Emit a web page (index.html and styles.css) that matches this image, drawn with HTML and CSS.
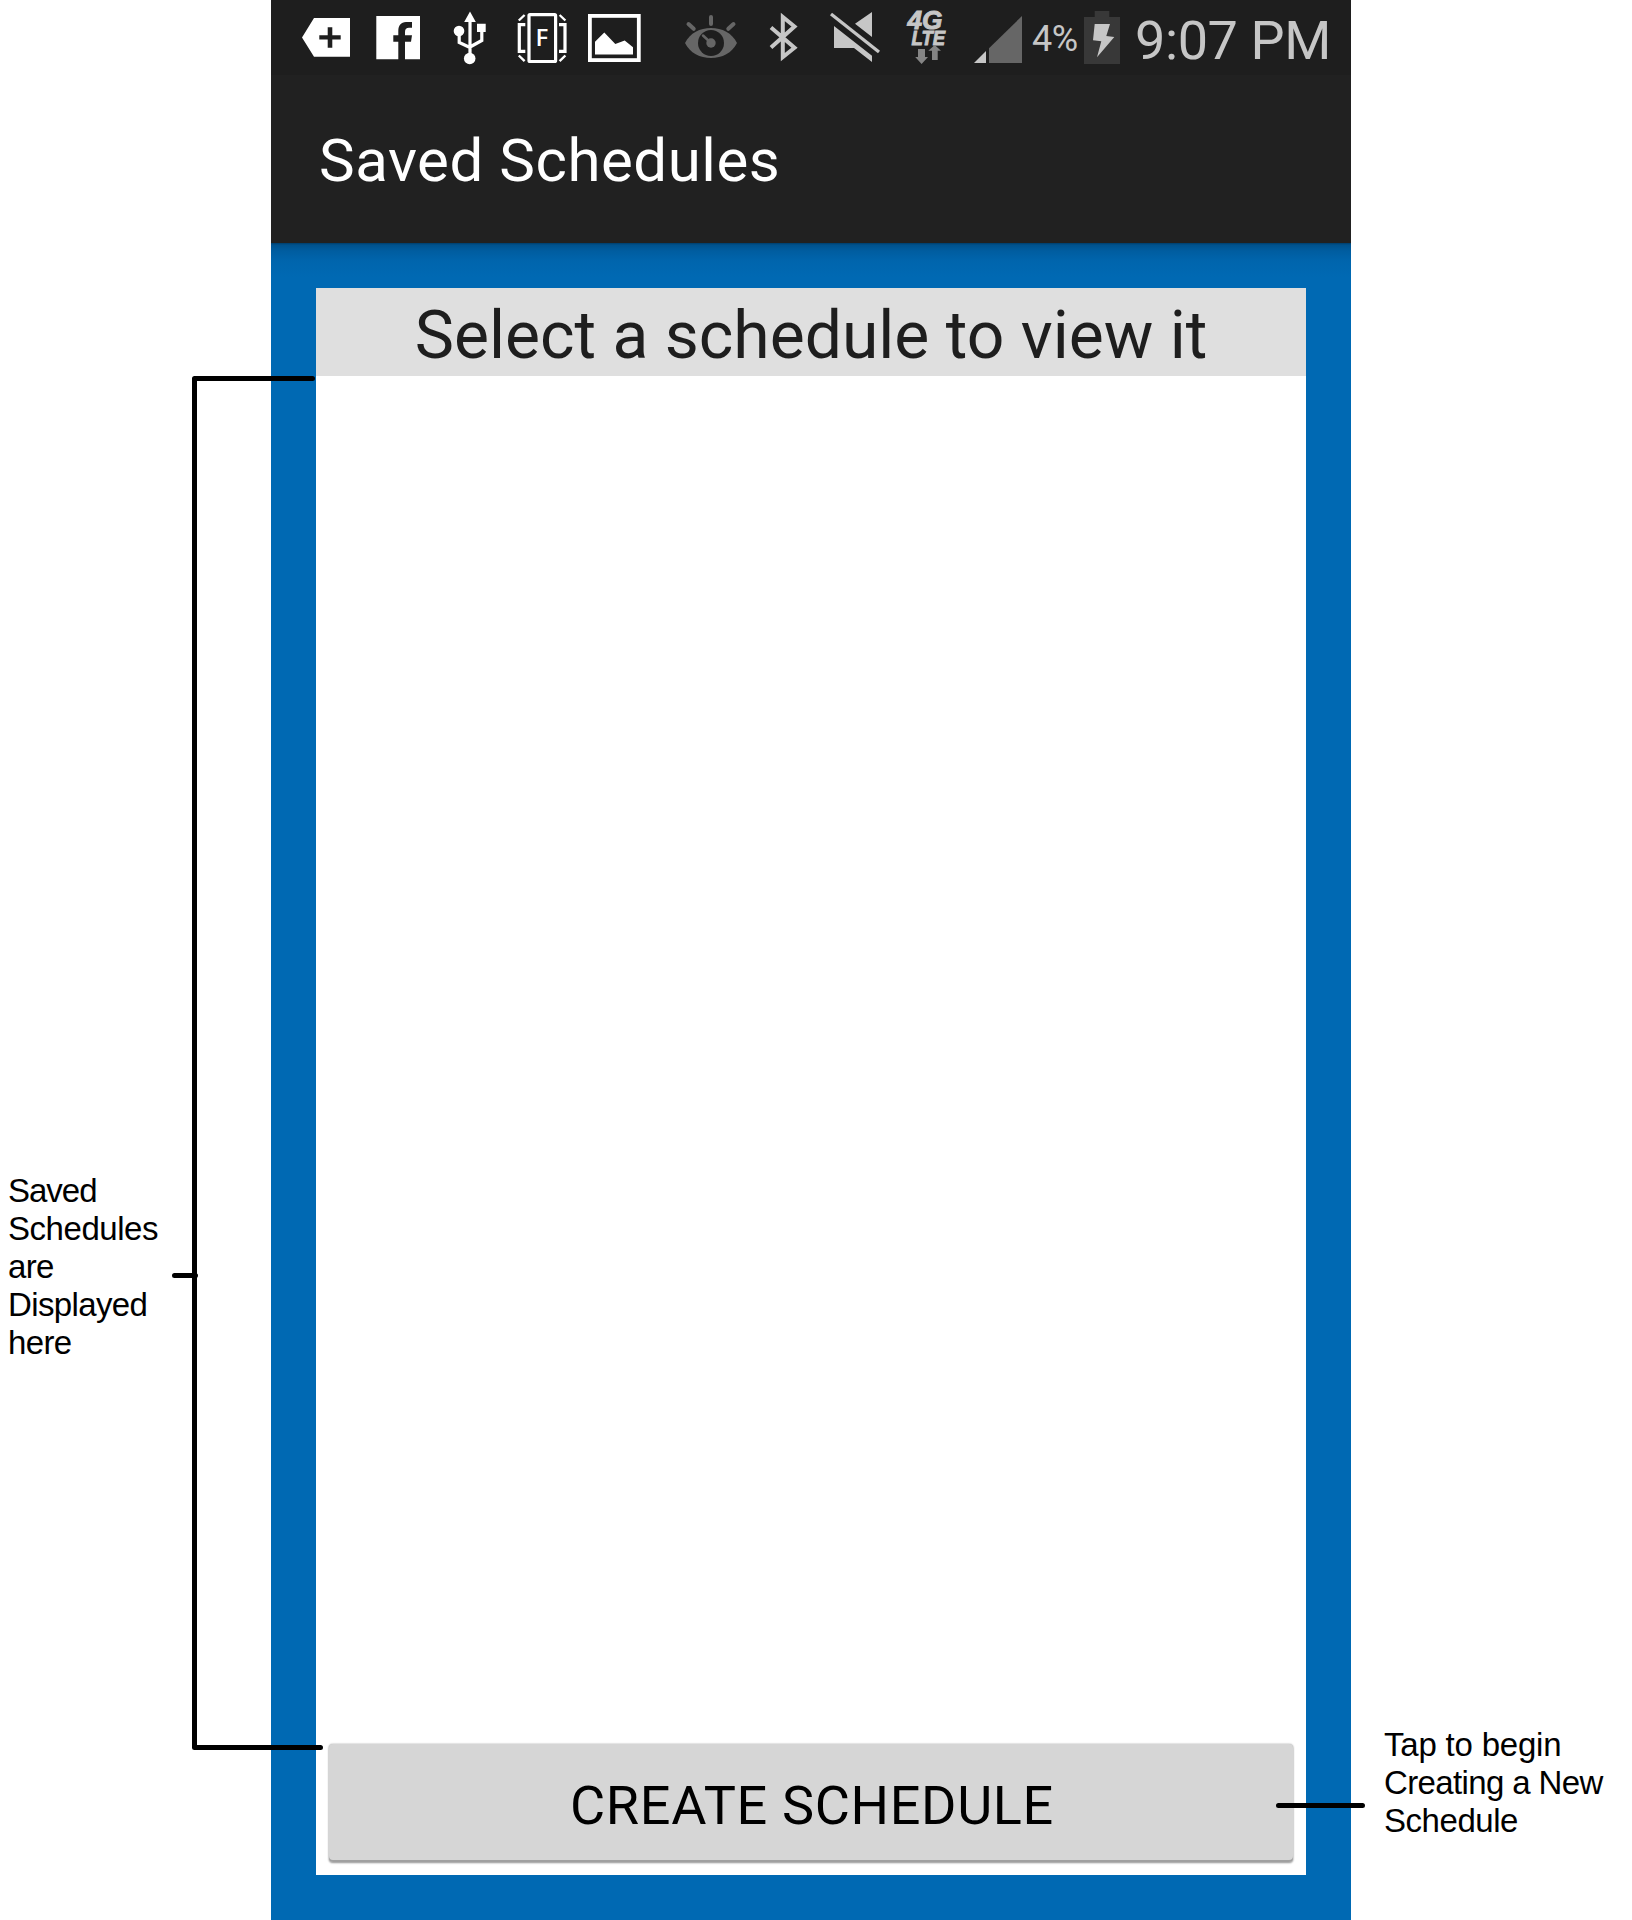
FILE: index.html
```html
<!DOCTYPE html>
<html lang="en">
<head>
<meta charset="utf-8">
<title>Saved Schedules</title>
<link rel="stylesheet" href="styles.css">
</head>
<body>
<div class="sheet">
  <aside class="note note-left"><span class="tightest">Saved</span><br><span class="snug">Schedules</span><br><span class="tight">are</span><br><span class="tight">Displayed</span><br><span class="tight">here</span></aside>
  <main class="phone">
    <div class="status">
      <div class="icons">
        <svg width="70" height="75" viewBox="293 0 70 75"><path class="w" fill-rule="evenodd" d="M302 37.6 314 18H350V56.8H314ZM327.7 27.3V35.2H319.3V39.6H327.7V47.7H332.3V39.6H340.7V35.2H332.3V27.3Z"/></svg>
        <svg width="73" height="75" viewBox="363 0 73 75"><path class="w" d="M376.3 16H420V59.3H405V41.8H411L412 35.2H405V32C405 29 406.5 27.7 409 27.7H412V22H406C401 22 398.3 25.5 398.3 31V35.2H393.3V41.8H398.3V59.3H376.3Z"/></svg>
        <svg width="67" height="75" viewBox="436 0 67 75"><path class="w" d="M470 11.5 475.8 22H464.2ZM477 23.7H485.7V32H477Z"/><circle class="w" cx="459" cy="31" r="5.3"/><circle class="w" cx="469.7" cy="58.5" r="5.8"/><path class="ws" d="M470 20V56M459.2 33V42.5L470 47.5M481.8 30V40.5L470 47"/></svg>
        <svg width="74" height="75" viewBox="503 0 74 75"><rect class="ws" x="529" y="14.7" width="26.6" height="46.8" rx="1"/><path class="ws" d="M525.3 24.7H519.3V51.3H525.3M559 24.7H565V51.3H559"/><path class="ws thin" d="M518.8 20.5 524.6 15M559.6 15 565.4 20.5M518.8 55.5 524.6 61.2M565.4 55.5 559.6 61.2"/><text class="f" x="535.5" y="46">F</text></svg>
        <svg width="73" height="75" viewBox="577 0 73 75"><rect class="ws thick" x="589.9" y="15.9" width="48.9" height="44.2"/><path class="w" d="M595 54.5V41.7L604.3 32.5 615.3 44 624.7 40.5 633 47.3V54.5Z"/></svg>
      </div>
      <div class="icons system">
        <svg width="72" height="75" viewBox="675 0 72 75"><path class="d" d="M685 43C690 33 700 28 711 28S732 33 737 43C732 53 722 58 711 58S690 53 685 43Z"/><circle class="bg" cx="711" cy="43" r="13"/><circle class="d" cx="711" cy="43" r="4.7"/><path class="ds" d="M711 17V24M688.5 24 693.7 28.8M733.5 24 728.3 28.8"/><path class="ds fine" d="M703 35.5 711 43"/></svg>
        <svg width="70" height="75" viewBox="747 0 70 75"><path class="gs" d="M771 27.5 794.5 47.7 782.8 57V17L794.5 26.5 771 47.5"/></svg>
        <svg width="76" height="75" viewBox="817 0 76 75"><path class="g" d="M872 12V37L855 23.7ZM834 26 872 55.7V62L854 48H834Z"/><path class="gs slash" d="M831 14 879 52"/></svg>
        <svg width="66" height="75" viewBox="893 0 66 75"><text class="net" x="907.5" y="29.3" font-size="25.5" textLength="35" lengthAdjust="spacingAndGlyphs">4G</text><text class="net" x="911.5" y="45.4" font-size="20" textLength="33.5" lengthAdjust="spacingAndGlyphs">LTE</text><path class="a" d="M918 49H925V57H928L921.6 64 915.2 57H918ZM932 60V50.7H928.3L934.7 45 941 50.7H937.7V60Z"/></svg>
        <svg width="70" height="75" viewBox="959 0 70 75"><path class="g" d="M974 63H986V51Z"/><path class="d" d="M989 63V48.3L1022 16V63Z"/></svg>
      </div>
      <span class="percent">4%</span>
      <svg width="40" height="75" viewBox="1082 0 40 75"><path class="b" d="M1084 17H1094.7V11H1109.3V17H1120V64H1084Z"/><path class="g" d="M1094.7 24H1110L1106.3 36 1114.3 37 1097 57.3 1101.3 41.2 1093 40.3Z"/></svg>
      <span class="time">9:07 PM</span>
    </div>
    <header class="appbar"><h1>Saved Schedules</h1></header>
    <section class="content">
      <div class="panel">
        <h2>Select a schedule to view it</h2>
        <div class="list"></div>
        <button class="create">CREATE SCHEDULE</button>
      </div>
    </section>
  </main>
  <aside class="note note-right"><span class="loose">Tap to begin</span><br><span class="tight">Creating a New</span><br><span class="snug">Schedule</span></aside>
  <svg class="lines" width="1632" height="1920" viewBox="0 0 1632 1920"><path d="M312.5 378.5H194.5V1747.5H320.5M174.5 1275.5H195.5M1278.5 1805.5H1362.5"/></svg>
</div>
</body>
</html>
```
FILE: styles.css
```css
* { box-sizing: border-box; }
body { margin: 0; background: #fff; }
.sheet {
  position: relative;
  display: grid;
  grid-template-columns: 271px 1080px 281px;
  width: 1632px;
  height: 1920px;
  overflow: hidden;
}
.phone {
  display: flex;
  flex-direction: column;
  font-family: Roboto, sans-serif;
  background: #0069b3;
}
.status {
  display: flex;
  height: 75px;
  padding-left: 22px;
  background: #1e1e1e;
  color: #c6c6c6;
  white-space: nowrap;
}
.icons { display: flex; }
.icons.system { margin-left: 25px; }
.status svg { display: block; flex: none; }
.w { fill: #fff; }
.g { fill: #c6c6c6; }
.d { fill: #666; }
.a { fill: #858585; }
.b { fill: #383838; }
.bg { fill: #1e1e1e; }
.ws { fill: none; stroke: #fff; stroke-width: 3.2; }
.ws.thin { stroke-width: 2.4; }
.ws.thick { stroke-width: 3.8; }
.ds { fill: none; stroke: #666; stroke-width: 4; stroke-linecap: round; }
.ds.fine { stroke-width: 2.5; }
.gs { fill: none; stroke: #c6c6c6; stroke-width: 4; }
.gs.slash { stroke-width: 3.3; }
.f { fill: #fff; font: 600 24px "Open Sans", sans-serif; }
.net {
  fill: #c6c6c6;
  stroke: #c6c6c6;
  stroke-width: .9;
  font-family: "Liberation Sans", sans-serif;
  font-weight: bold;
  font-style: italic;
}
.percent {
  width: 53px;
  padding: 18px 0 0 3px;
  font-size: 36px;
  line-height: 42px;
  letter-spacing: -.6px;
}
.time {
  padding: 9px 0 0 13px;
  font-size: 54px;
  line-height: 64px;
  letter-spacing: -.4px;
}
.appbar {
  display: flex;
  align-items: flex-start;
  height: 168px;
  padding: 51px 0 0 48px;
  background: #212121;
  color: #fff;
}
h1, h2 { margin: 0; font-weight: 400; }
h1 { font-size: 60px; line-height: 70px; letter-spacing: .54px; white-space: nowrap; }
.content {
  flex: 1;
  padding: 45px;
  background: linear-gradient(#003e6b 0, #00528d 2px, #005da0 8px, #0065ad 18px, #0069b3 34px);
}
.panel {
  display: flex;
  flex-direction: column;
  height: 1587px;
  padding-bottom: 13px;
  background: #fff;
}
h2 {
  height: 88px;
  padding-top: 9px;
  background: #dfdfdf;
  color: #1e1e1e;
  font-size: 66px;
  line-height: 77px;
  text-align: center;
  white-space: nowrap;
}
.list { flex: 1; }
.create {
  height: 118px;
  margin: 0 13px;
  padding: 4px 0 0 2px;
  border: 0;
  border-radius: 4px;
  background: #d6d6d6;
  box-shadow: inset 0 -2px #a0a0a0, 0 0 2px #aaa, 0 1px 2px #999;
  color: #000;
  font: 400 54px/63px Roboto, sans-serif;
  letter-spacing: .67px;
}
.note {
  font: 33px/38px "Liberation Sans", Arial, sans-serif;
  color: #000;
  white-space: nowrap;
}
.note-left { padding: 1172px 0 0 8px; }
.note-right { padding: 1726px 0 0 33px; }
.loose { letter-spacing: -.2px; }
.snug { letter-spacing: -.45px; }
.tight { letter-spacing: -.62px; }
.tightest { letter-spacing: -1px; }
/* Callout lines run across the phone edges */
.lines { position: absolute; inset: 0; pointer-events: none; }
.lines path {
  fill: none;
  stroke: #000;
  stroke-width: 5;
  stroke-linecap: round;
  stroke-linejoin: round;
}
```
